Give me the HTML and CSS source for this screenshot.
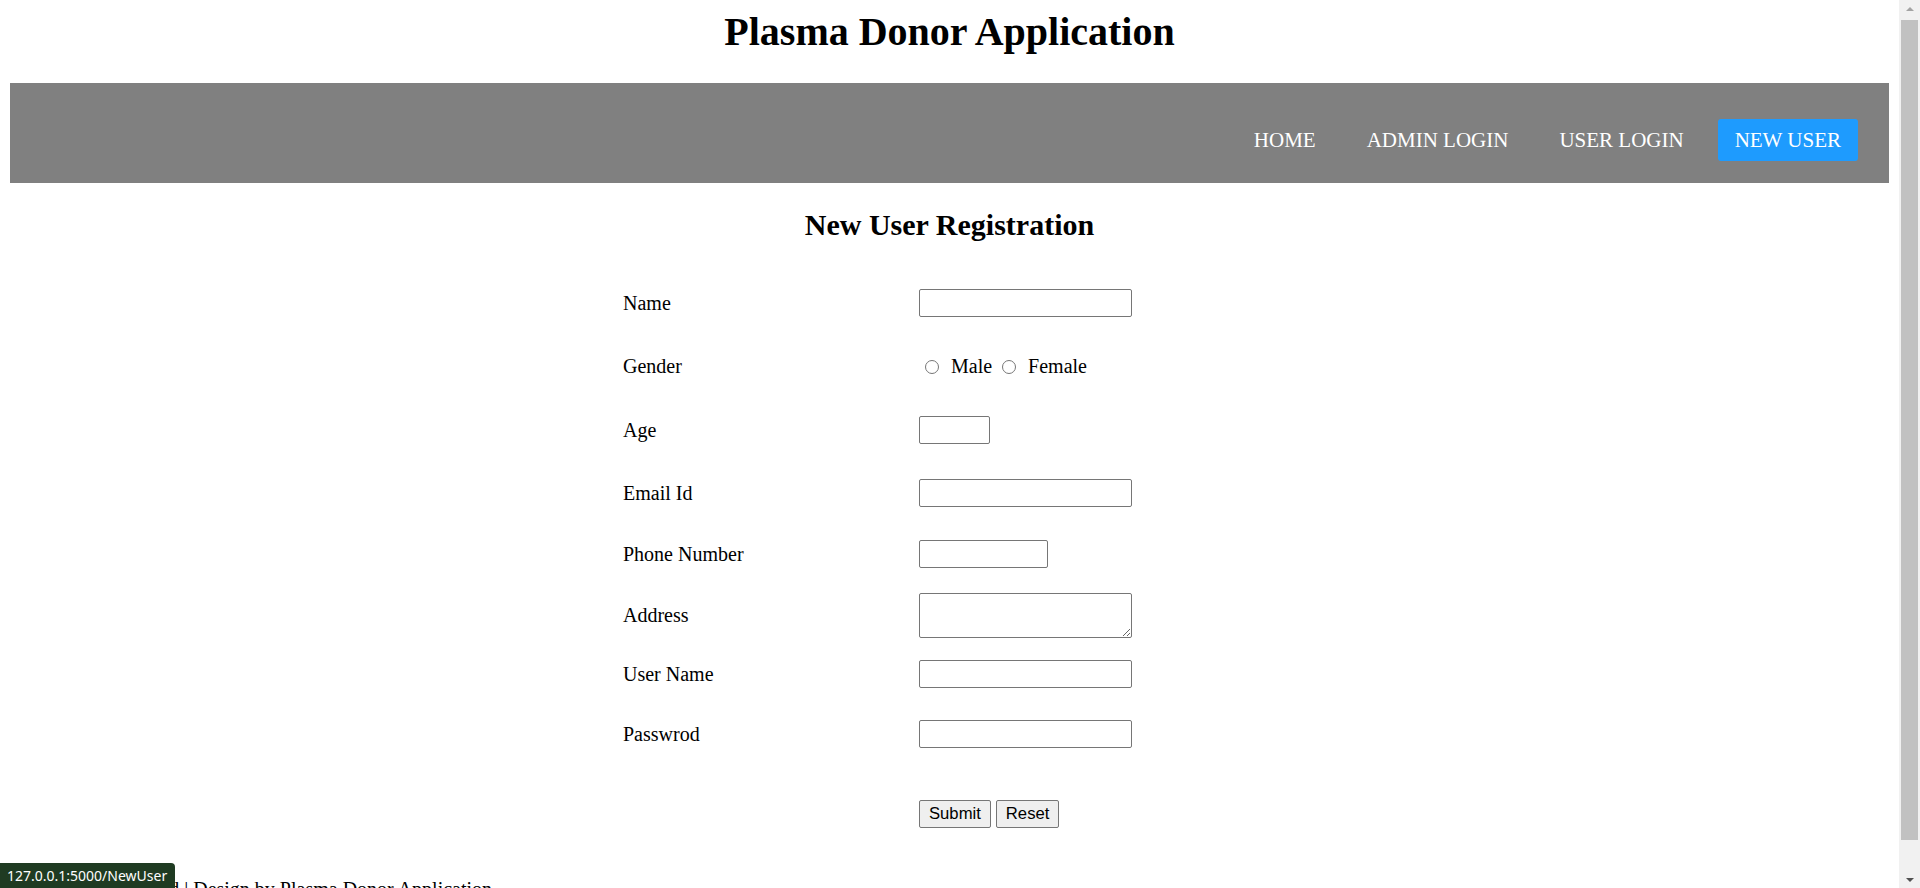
FILE: index.html
```html
<!DOCTYPE html>
<html lang="en">
<head>
<meta charset="utf-8">
<title>Plasma Donor Application</title>
<link rel="stylesheet" href="styles.css">
</head>
<body>
<main class="page">
  <h1 class="title">Plasma Donor Application</h1>
  <nav class="topnav">
    <a class="nav-link" href="#">HOME</a>
    <a class="nav-link" href="#">ADMIN LOGIN</a>
    <a class="nav-link" href="#">USER LOGIN</a>
    <a class="nav-link active" href="#">NEW USER</a>
  </nav>
  <h2 class="subtitle">New User Registration</h2>
  <form class="reg-form">
    <label class="lbl">Name</label>
    <div class="fld"><input class="txt txt-wide" type="text"></div>

    <label class="lbl">Gender</label>
    <div class="fld radios"><label class="opt"><input class="radio" type="radio" name="g"> Male</label> <label class="opt"><input class="radio" type="radio" name="g"> Female</label></div>

    <label class="lbl">Age</label>
    <div class="fld"><input class="txt txt-age" type="text"></div>

    <label class="lbl">Email Id</label>
    <div class="fld"><input class="txt txt-wide" type="text"></div>

    <label class="lbl">Phone Number</label>
    <div class="fld"><input class="txt txt-phone" type="text"></div>

    <label class="lbl">Address</label>
    <div class="fld"><textarea class="area"></textarea></div>

    <label class="lbl">User Name</label>
    <div class="fld"><input class="txt txt-wide" type="text"></div>

    <label class="lbl">Passwrod</label>
    <div class="fld"><input class="txt txt-wide" type="password"></div>

    <span class="lbl"></span>
    <div class="fld"><button class="btn" type="submit">Submit</button> <button class="btn" type="reset">Reset</button></div>
  </form>
  <footer class="footer">All Rights Reserved | Design by Plasma Donor Application</footer>
</main>
<aside class="scrollbar">
  <div class="sb-btn sb-up"></div>
  <div class="sb-track"><div class="sb-thumb"></div></div>
  <div class="sb-btn sb-down"></div>
</aside>
<div class="statusbar">127.0.0.1:5000/NewUser</div>
</body>
</html>
```

FILE: styles.css
```css
html, body {
  margin: 0;
  padding: 0;
}

body {
  display: flex;
  height: 100vh;
  overflow: hidden;
  background: #ffffff;
  color: #000000;
  font-family: "Liberation Serif", "Times New Roman", serif;
}

.page {
  flex: 1;
  min-width: 0;
  padding: 0 10px;
}

.title {
  margin: 9px 0 0;
  font-size: 40px;
  line-height: 46px;
  font-weight: bold;
  text-align: center;
}

.topnav {
  margin-top: 28px;
  height: 100px;
  box-sizing: border-box;
  background: #808080;
  display: flex;
  justify-content: flex-end;
  align-items: flex-start;
  gap: 17px;
  padding: 36px 31px 0 0;
}

.nav-link {
  display: block;
  padding: 9px 17px;
  font-size: 21px;
  line-height: 24px;
  color: #ffffff;
  text-decoration: none;
  border-radius: 3px;
}

.nav-link.active {
  background: #1e9bfe;
}

.subtitle {
  margin: 25px 0 0;
  font-size: 30px;
  line-height: 34px;
  font-weight: bold;
  text-align: center;
}

.reg-form {
  width: 653px;
  margin: 30px auto 0;
  display: grid;
  grid-template-columns: 296px 1fr;
  grid-template-rows: 62px 64px 64px 62px 60px 63px 54px 66px 94px;
  align-items: center;
}

.lbl {
  font-size: 20px;
  line-height: 23px;
}

.fld {
  font-size: 20px;
  line-height: 23px;
}

.fld > * {
  vertical-align: top;
}

.txt, .area {
  box-sizing: border-box;
  border: 1px solid #767676;
  border-radius: 2px;
  background: #ffffff;
  padding: 1px 3px;
  margin: 0;
  font-family: "Liberation Sans", Arial, sans-serif;
  font-size: 16px;
  display: block;
}

.txt {
  height: 28px;
}

.txt-wide { width: 213px; }
.txt-age { width: 71px; }
.txt-phone { width: 129px; }

.area {
  width: 213px;
  height: 45px;
}

.radios {
  white-space: nowrap;
  padding-left: 1px;
}

.radios > .opt {
  vertical-align: baseline;
}

.radio {
  width: 14px;
  height: 14px;
  margin: 0 7px 0 5px;
  vertical-align: -1px;
}

.btn {
  height: 28px;
  padding: 0 9px;
  margin: 0;
  border: 1px solid #767676;
  border-radius: 2px;
  background: #efefef;
  color: #000000;
  font-family: "Liberation Sans", Arial, sans-serif;
  font-size: 16.67px;
}

.footer {
  margin-top: 17px;
  padding-left: 7px;
  font-size: 20px;
  line-height: 23px;
  white-space: nowrap;
}

.scrollbar {
  flex: 0 0 21px;
  background: #f1f1f1;
  display: flex;
  flex-direction: column;
}

.sb-btn {
  height: 17px;
  display: flex;
  align-items: center;
  justify-content: center;
}

.sb-up::before {
  content: "";
  border-left: 4px solid transparent;
  border-right: 4px solid transparent;
  border-bottom: 4px solid #a3a3a3;
}

.sb-down::before {
  content: "";
  border-left: 4px solid transparent;
  border-right: 4px solid transparent;
  border-top: 4px solid #505050;
}

.sb-track {
  flex: 1;
  padding: 3px 2px 0;
}

.sb-thumb {
  height: 820px;
  background: #c1c1c1;
}

.statusbar {
  position: fixed;
  left: 0;
  bottom: 0;
  height: 25px;
  line-height: 25px;
  padding: 0 8px 0 7px;
  background: #1f3b22;
  color: #ffffff;
  font-family: "Noto Sans", "Open Sans", sans-serif;
  font-size: 14px;
  border-top-right-radius: 4px;
}
```
